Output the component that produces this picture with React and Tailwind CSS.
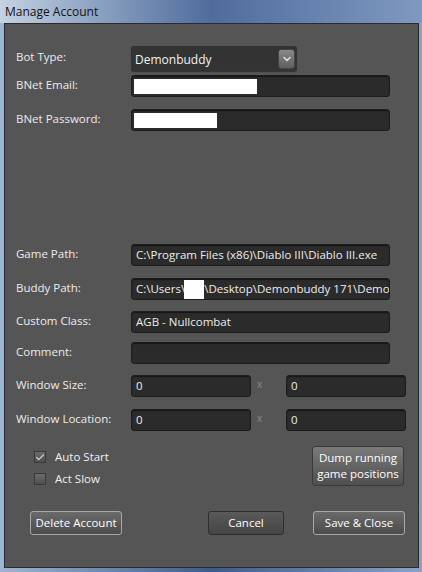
import { Check, ChevronDown } from 'lucide-react'

const font = { fontFamily: '"Open Sans", "Noto Sans", sans-serif' }

function Field({ label, top, children }) {
  return (
    <div className={`flex items-center ${top}`}>
      <div className="w-[115px] shrink-0 text-[11.5px] text-[#ececec] -mt-[3px]">{label}</div>
      {children}
    </div>
  )
}

function Input({ value, className = 'w-[259px]', children }) {
  return (
    <div className={`h-[22px] ${className} shrink-0 flex items-center rounded-[3px] border border-[#1c1c1c] bg-[#2b2b2b] px-[4px] text-[11.5px] text-[#ededed] whitespace-nowrap overflow-hidden shadow-[inset_0_1px_1px_rgba(0,0,0,0.5)]`}>
      {value}
      {children}
    </div>
  )
}

function Btn({ children, className = '' }) {
  return (
    <div className={`flex items-center justify-center rounded-[3px] border text-[11.5px] leading-[16px] text-white bg-gradient-to-b ${className}`}>
      {children}
    </div>
  )
}

function CheckRow({ label, checked }) {
  return (
    <div className="flex items-center gap-[9px] h-[22px]">
      <div className="w-[12px] h-[12px] border border-[#3a3a3a] bg-gradient-to-b from-[#6c6c6c] to-[#4e4e4e] flex items-center justify-center">
        {checked && <Check className="w-[11px] h-[11px] text-[#cfcfcf]" strokeWidth={3} />}
      </div>
      <span className="text-[11.5px] text-[#f0f0f0]">{label}</span>
    </div>
  )
}

function Sep() {
  return <span className="w-[35px] shrink-0 pl-[6px] text-[10px] text-[#8a8a8a] -mt-[3px]">x</span>
}

export default function App() {
  return (
    <div style={font} className="w-[422px] h-[572px] flex flex-col bg-gradient-to-r from-[#9fb6d2] via-[#3d5b8d] to-[#8aa2c6]">
      <div className="h-[23px] shrink-0 flex items-center pl-[5px] text-[12px] text-[#111] bg-gradient-to-r from-[#c4d2e2] via-[#4f6c9c] to-[#7f99c0]">
        Manage Account
      </div>
      <div className="flex-1 ml-[4px] mr-[3px] mb-[4px] border border-[#2b2b2b] bg-[#555555] pl-[11px] pt-[22px]">
        <Field label="Bot Type:">
          <div className="h-[25px] w-[166px] flex items-center justify-between rounded-[3px] bg-[#333333] pl-[4px] pr-[2px] text-[12px] text-[#f2f2f2] shadow-[0_1px_1px_rgba(0,0,0,0.4)]">
            <span className="mt-[2px]">Demonbuddy</span>
            <div className="w-[17px] h-[20px] rounded-[3px] bg-gradient-to-b from-[#8a8a8a] to-[#5e5e5e] border border-[#444] flex items-center justify-center">
              <ChevronDown className="w-[12px] h-[12px] text-[#e0e0e0]" strokeWidth={3} />
            </div>
          </div>
        </Field>
        <Field label="BNet Email:" top="mt-[4px]">
          <Input className="w-[259px] !px-[2px]">
            <div className="w-[123px] h-[15px] bg-white shrink-0" />
          </Input>
        </Field>
        <Field label="BNet Password:" top="mt-[12px]">
          <Input className="w-[259px] !px-[2px]">
            <div className="w-[83px] h-[15px] bg-white shrink-0" />
          </Input>
        </Field>
        <Field label="Game Path:" top="mt-[113px]">
          <Input value="C:\Program Files (x86)\Diablo III\Diablo III.exe" />
        </Field>
        <Field label="Buddy Path:" top="mt-[12px]">
          <Input>
            <span className="shrink-0">C:\Users\</span>
            <span className="block shrink-0 w-[20px] h-[19px] bg-white -ml-[1px]" />
            <span className="shrink-0">\Desktop\Demonbuddy 171\Demonbuddy.exe</span>
          </Input>
        </Field>
        <Field label="Custom Class:" top="mt-[11px]">
          <Input value="AGB - Nullcombat" />
        </Field>
        <Field label="Comment:" top="mt-[9px]">
          <Input value="" />
        </Field>
        <Field label="Window Size:" top="mt-[11px]">
          <Input value="0" className="w-[120px]" />
          <Sep />
          <Input value="0" className="w-[120px]" />
        </Field>
        <Field label="Window Location:" top="mt-[12px]">
          <Input value="0" className="w-[120px]" />
          <Sep />
          <Input value="0" className="w-[120px]" />
        </Field>
        <div className="mt-[15px] flex items-start">
          <div className="ml-[18px] flex flex-col">
            <CheckRow label="Auto Start" checked />
            <CheckRow label="Act Slow" />
          </div>
          <Btn className="ml-auto mr-[14px] w-[92px] h-[40px] border-[#3a3a3a] from-[#7a7a7a] to-[#4f4f4f] text-center">
            Dump running<br />game positions
          </Btn>
        </div>
        <div className="mt-[21px] flex items-center">
          <Btn className="ml-[14px] w-[92px] h-[24px] border-[#a8a8a8] from-[#6a6a6a] to-[#4c4c4c]">Delete Account</Btn>
          <Btn className="ml-[86px] w-[76px] h-[24px] border-[#2e2e2e] from-[#5a5a5a] to-[#454545]">Cancel</Btn>
          <Btn className="ml-[29px] w-[92px] h-[24px] border-[#a8a8a8] from-[#6a6a6a] to-[#4c4c4c]">Save &amp; Close</Btn>
        </div>
      </div>
    </div>
  )
}
